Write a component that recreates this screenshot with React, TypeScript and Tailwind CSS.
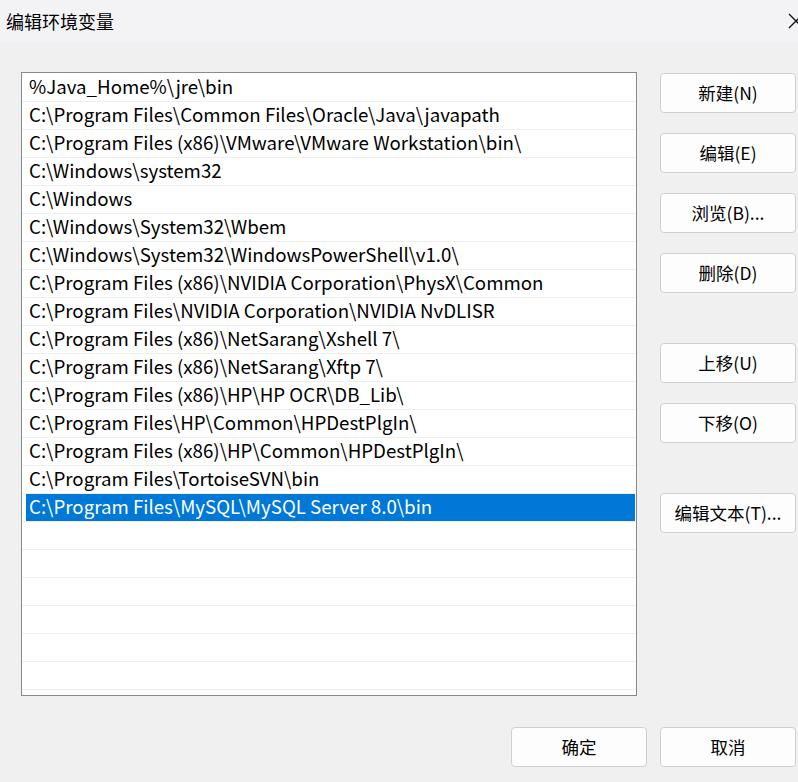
const paths = [
  '%Java_Home%\\jre\\bin',
  'C:\\Program Files\\Common Files\\Oracle\\Java\\javapath',
  'C:\\Program Files (x86)\\VMware\\VMware Workstation\\bin\\',
  'C:\\Windows\\system32',
  'C:\\Windows',
  'C:\\Windows\\System32\\Wbem',
  'C:\\Windows\\System32\\WindowsPowerShell\\v1.0\\',
  'C:\\Program Files (x86)\\NVIDIA Corporation\\PhysX\\Common',
  'C:\\Program Files\\NVIDIA Corporation\\NVIDIA NvDLISR',
  'C:\\Program Files (x86)\\NetSarang\\Xshell 7\\',
  'C:\\Program Files (x86)\\NetSarang\\Xftp 7\\',
  'C:\\Program Files (x86)\\HP\\HP OCR\\DB_Lib\\',
  'C:\\Program Files\\HP\\Common\\HPDestPlgIn\\',
  'C:\\Program Files (x86)\\HP\\Common\\HPDestPlgIn\\',
  'C:\\Program Files\\TortoiseSVN\\bin',
  'C:\\Program Files\\MySQL\\MySQL Server 8.0\\bin',
];

const SELECTED = 15;
const EMPTY_ROWS = 7;

function DialogButton({ label, className = '' }: { label: string; className?: string }) {
  return (
    <button
      className={`h-[40px] w-[136px] rounded-[4px] border border-[#d0d0d0] bg-[#fdfdfd] text-[17.5px] text-black ${className}`}
    >
      {label}
    </button>
  );
}

export default function App() {
  return (
    <div
      className="flex h-[782px] w-[798px] flex-col overflow-hidden bg-[#f0f0f0]"
      style={{ fontFamily: '"Noto Sans CJK SC", "Noto Sans", sans-serif' }}
    >
      {/* title bar */}
      <div className="flex h-[42px] shrink-0 items-center justify-between bg-[#f3f3f6] pl-[6px]">
        <span className="text-[18px] text-black">编辑环境变量</span>
        <svg width="16" height="16" viewBox="0 0 16 16" className="mr-[-6px]">
          <path d="M1 1 L15 15 M15 1 L1 15" stroke="#111" strokeWidth="1.3" />
        </svg>
      </div>

      <div className="flex pl-[21px] pt-[30px]">
        {/* path list */}
        <div className="h-[624px] w-[616px] overflow-hidden border border-[#868a91] bg-white pt-[1px]">
          {paths.map((p, i) => (
            <div key={p} className="h-[28px] border-b border-[#efefef]">
              <div
                className={
                  i === SELECTED
                    ? 'ml-[4px] mr-[1px] flex h-full items-center bg-[#0078d7] pb-[2px] pl-[3px] text-white'
                    : 'ml-[4px] mr-[1px] flex h-full items-center pb-[2px] pl-[3px] text-black'
                }
              >
                <span className="whitespace-nowrap text-[18.7px] leading-none">{p}</span>
              </div>
            </div>
          ))}
          {Array.from({ length: EMPTY_ROWS }).map((_, i) => (
            <div key={i} className="h-[28px] border-b border-[#efefef]" />
          ))}
        </div>

        {/* side buttons */}
        <div className="ml-[23px] flex flex-col pt-[1px]">
          <DialogButton label="新建(N)" />
          <DialogButton label="编辑(E)" className="mt-[20px]" />
          <DialogButton label="浏览(B)..." className="mt-[20px]" />
          <DialogButton label="删除(D)" className="mt-[20px]" />
          <DialogButton label="上移(U)" className="mt-[50px]" />
          <DialogButton label="下移(O)" className="mt-[20px]" />
          <DialogButton label="编辑文本(T)..." className="mt-[50px]" />
        </div>
      </div>

      {/* footer */}
      <div className="mt-[31px] flex justify-end gap-[13px] pr-[2px]">
        <DialogButton label="确定" />
        <DialogButton label="取消" />
      </div>
    </div>
  );
}
